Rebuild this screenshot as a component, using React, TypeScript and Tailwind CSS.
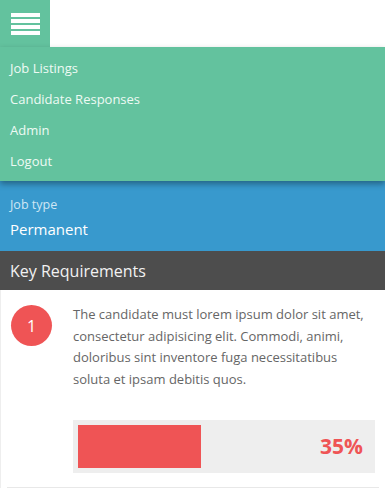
import React from 'react';

const menuItems = ['Job Listings', 'Candidate Responses', 'Admin', 'Logout'];

const requirements = [
  {
    id: 1,
    text: 'The candidate must lorem ipsum dolor sit amet, consectetur adipisicing elit. Commodi, animi, doloribus sint inventore fuga necessitatibus soluta et ipsam debitis quos.',
    percent: 35,
  },
];

export default function App() {
  return (
    <div className="w-[385px] min-h-[496px] bg-white font-['Open_Sans',sans-serif]">
      {/* Header */}
      <div className="flex h-[47px]">
        <button className="w-[50px] h-[47px] bg-[#63c29e] flex flex-col items-center justify-center gap-[2px]">
          <span className="block w-[29px] h-[4px] bg-white" />
          <span className="block w-[29px] h-[4px] bg-white" />
          <span className="block w-[29px] h-[4px] bg-white" />
          <span className="block w-[29px] h-[4px] bg-white" />
        </button>
        <div className="flex-1 bg-white" />
      </div>

      {/* Menu */}
      <div className="relative z-10 bg-[#63c29e] pt-[6px] pb-[4px] shadow-[0_3px_6px_rgba(0,0,0,0.35)]">
        {menuItems.map((item) => (
          <div key={item} className="px-[10px] h-[31px] flex items-center text-[13px] text-[#eefaf4]">
            {item}
          </div>
        ))}
      </div>

      {/* Job type */}
      <div className="bg-[#3899cd] px-[10px] pt-[15px] pb-[10px]">
        <div className="text-[12.5px] leading-[18px] text-[#cfe6f4]">Job type</div>
        <div className="text-[15px] leading-[24px] text-white mt-[3px]">Permanent</div>
      </div>

      {/* Key Requirements */}
      <div className="bg-[#4d4d4d] h-[39px] px-[10px] flex items-center text-[16px] text-[#f2f2f2]">
        Key Requirements
      </div>

      {/* Requirements */}
      <div className="border-l border-[#eeeeee] pt-[14px]">
        {requirements.map((req) => (
          <div key={req.id} className="mx-[6px]">
            <div className="flex">
              <div className="w-[41px] h-[41px] shrink-0 rounded-full bg-[#ef5455] text-white text-[16px] flex items-center justify-center ml-[4px] mt-[1px]">
                {req.id}
              </div>
              <div className="ml-[21px] mr-[4px] flex-1">
                <p className="text-[13px] leading-[21.5px] text-[#666666]">{req.text}</p>
                <div className="mt-[30px] bg-[#eeeeee] h-[53px] p-[5px] flex items-center">
                  <div className="h-full bg-[#ef5455]" style={{ width: `${(123 / 293) * 100}%` }} />
                  <div className="flex-1 text-right pr-[7px] text-[21px] font-bold text-[#ef5455]">{req.percent}%</div>
                </div>
              </div>
            </div>
            <div className="mt-[14px] border-t border-[#e8e8e8]" />
          </div>
        ))}
      </div>
    </div>
  );
}
